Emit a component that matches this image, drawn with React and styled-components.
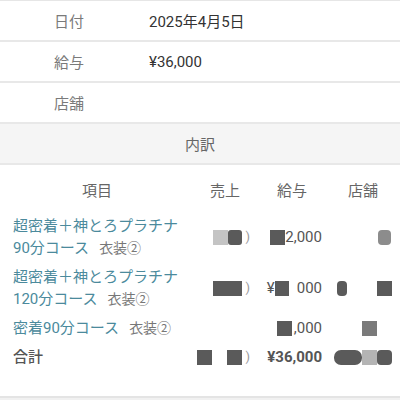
import React from "react";
import styled, { createGlobalStyle } from "styled-components";

const GlobalStyle = createGlobalStyle`
  html, body {
    margin: 0;
    padding: 0;
    background: #f1f1f1;
  }
  body {
    font-family: "Roboto", "Noto Sans CJK JP", sans-serif;
    -webkit-font-smoothing: antialiased;
  }
`;

const Card = styled.div`
  width: 400px;
  background: #fff;
  border-top: 1px solid #e6e6e6;
  border-bottom: 2px solid #e4e4e4;
`;

const InfoRow = styled.div`
  display: grid;
  grid-template-columns: 95px 1fr;
  align-items: center;
  height: 39px;
  padding-left: 54px;
  border-bottom: 2px solid #e8e8e8;
`;

const InfoLabel = styled.div`
  font-size: 15px;
  color: #7a7a7a;
`;

const InfoValue = styled.div`
  font-size: 15px;
  color: #333;
`;

const Band = styled.div`
  height: 39px;
  display: flex;
  align-items: center;
  justify-content: center;
  background: #f5f5f5;
  border-bottom: 2px solid #e8e8e8;
  font-size: 15px;
  color: #666;
`;

const Table = styled.div`
  display: flex;
  flex-direction: column;
  gap: 7px;
  padding: 15px 0 28px 13px;
`;

const TableRow = styled.div`
  display: grid;
  grid-template-columns: 182px 60px 74px 68px;
  align-items: center;
  margin-bottom: ${(p) => (p.$head ? "6px" : "0")};
`;

const Head = styled.div`
  font-size: 15px;
  line-height: 22px;
  color: #666;
  text-align: center;
  padding-right: ${(p) => p.$pr || 0}px;
`;

const ItemName = styled.div`
  font-size: 15px;
  line-height: 22px;
  color: ${(p) => (p.$total ? "#555" : "#4b8a9c")};
  font-weight: ${(p) => (p.$total ? 500 : 400)};
  white-space: nowrap;
`;

const Costume = styled.span`
  font-size: 14px;
  color: #777;
  margin-left: 10px;
`;

const Cell = styled.div`
  display: flex;
  align-items: center;
  justify-content: flex-end;
  padding-right: ${(p) => p.$pr}px;
  font-size: 15px;
  line-height: 22px;
  color: #555;
  font-weight: ${(p) => (p.$bold ? 700 : 400)};
  white-space: nowrap;
`;

const Redact = styled.span`
  display: inline-block;
  width: ${(p) => p.$w}px;
  height: ${(p) => p.$h || 15}px;
  background: ${(p) => p.$c || "#5a5a5a"};
  border-radius: ${(p) => p.$r || 0}px;
  margin-left: ${(p) => p.$ml || 0}px;
  margin-right: ${(p) => p.$mr || 0}px;
`;

const Tick = styled.span`
  color: #999;
  font-size: 13px;
  margin-left: 3px;
`;

const App = () => {
  return (
    <>
      <GlobalStyle />
      <Card>
        <InfoRow>
          <InfoLabel>日付</InfoLabel>
          <InfoValue>2025年4月5日</InfoValue>
        </InfoRow>
        <InfoRow>
          <InfoLabel>給与</InfoLabel>
          <InfoValue>¥36,000</InfoValue>
        </InfoRow>
        <InfoRow>
          <InfoLabel>店舗</InfoLabel>
          <InfoValue></InfoValue>
        </InfoRow>
        <Band>内訳</Band>
        <Table>
          <TableRow $head>
            <Head $pr={14}>項目</Head>
            <Head>売上</Head>
            <Head>給与</Head>
            <Head>店舗</Head>
          </TableRow>

          <TableRow>
            <ItemName>
              超密着＋神とろプラチナ
              <br />
              90分コース<Costume>衣装②</Costume>
            </ItemName>
            <Cell $pr={5}>
              <Redact $w={15} $c="#c4c4c4" />
              <Redact $w={14} $r={3} />
              <Tick>)</Tick>
            </Cell>
            <Cell $pr={7}>
              <Redact $w={15} />
              2,000
            </Cell>
            <Cell $pr={6}>
              <Redact $w={13} $c="#8c8c8c" $r={4} />
            </Cell>
          </TableRow>

          <TableRow>
            <ItemName>
              超密着＋神とろプラチナ
              <br />
              120分コース<Costume>衣装②</Costume>
            </ItemName>
            <Cell $pr={5}>
              <Redact $w={29} />
              <Tick>)</Tick>
            </Cell>
            <Cell $pr={7}>
              ¥<Redact $w={14} $mr={8} />
              000
            </Cell>
            <Cell $pr={5}>
              <Redact $w={10} $r={4} $mr={30} />
              <Redact $w={15} />
            </Cell>
          </TableRow>

          <TableRow>
            <ItemName>
              密着90分コース<Costume>衣装②</Costume>
            </ItemName>
            <Cell $pr={5}></Cell>
            <Cell $pr={7}>
              <Redact $w={15} $mr={2} />
              ,000
            </Cell>
            <Cell $pr={20}>
              <Redact $w={15} $c="#7a7a7a" />
            </Cell>
          </TableRow>

          <TableRow>
            <ItemName $total>合計</ItemName>
            <Cell $pr={5}>
              <Redact $w={15} $mr={15} />
              <Redact $w={15} />
              <Tick>)</Tick>
            </Cell>
            <Cell $pr={7} $bold>
              ¥36,000
            </Cell>
            <Cell $pr={5}>
              <Redact $w={28} $r={7} />
              <Redact $w={15} $c="#b4b4b4" />
              <Redact $w={15} $r={4} />
            </Cell>
          </TableRow>
        </Table>
      </Card>
    </>
  );
};

export default App;
